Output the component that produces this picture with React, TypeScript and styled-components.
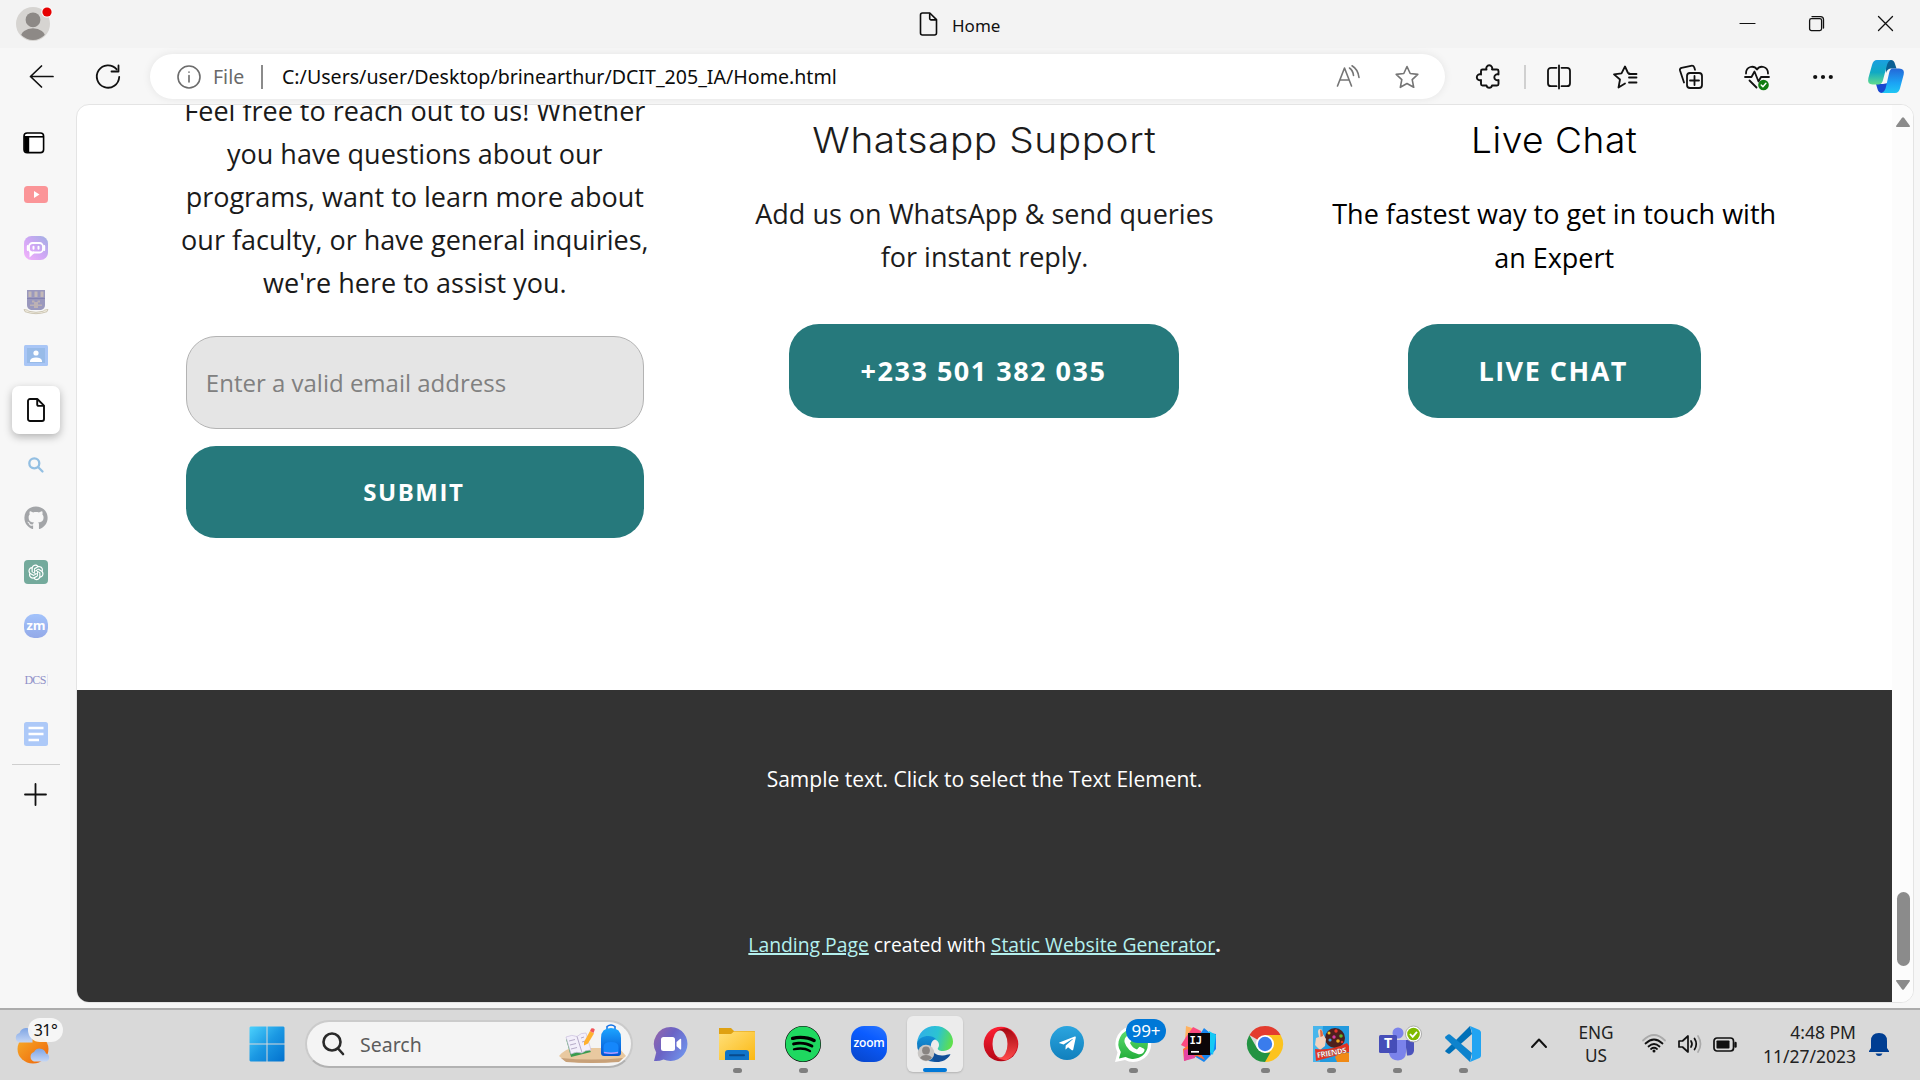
import React from "react";
import styled, { createGlobalStyle } from "styled-components";
import { FaGithub, FaSpotify, FaTelegramPlane } from "react-icons/fa";
import { AiOutlineOpenAI } from "react-icons/ai";

const ui = `"Noto Sans", "Open Sans", sans-serif`;
const body = `"Open Sans", "Noto Sans", sans-serif`;

const Global = createGlobalStyle`
  * { box-sizing: border-box; }
  html, body { margin: 0; padding: 0; overflow: hidden; }
  svg { display: block; flex: none; overflow: visible; }
`;

const Screen = styled.div`
  width: 1920px;
  height: 1080px;
  display: flex;
  flex-direction: column;
  background: #f7f7f7;
  font-family: ${ui};
  color: #1b1b1b;
  overflow: hidden;
`;

/* ---------- title bar ---------- */
const TitleBar = styled.header`
  height: 48px;
  flex: none;
  background: #f3f3f3;
  display: grid;
  grid-template-columns: 919px 1fr auto;
  align-items: center;
`;
const ProfileSlot = styled.div`
  padding-left: 16px;
`;
const TabTitle = styled.div`
  display: flex;
  align-items: center;
  gap: 14px;
  font-size: 17px;
  color: #111;
  span { padding-top: 3px; }
`;
const WindowButtons = styled.div`
  display: flex;
`;
const WindowButton = styled.button`
  width: 69px;
  height: 48px;
  border: 0;
  padding: 0 0 1px;
  background: none;
  display: flex;
  align-items: center;
  justify-content: center;
`;

/* ---------- toolbar ---------- */
const Toolbar = styled.div`
  height: 56px;
  flex: none;
  display: flex;
  align-items: flex-start;
  padding: 6px 0 0 9px;
`;
const ToolButton = styled.button<{ $w?: number }>`
  width: ${(p) => p.$w ?? 66}px;
  height: 45px;
  flex: none;
  border: 0;
  padding: 0;
  background: none;
  display: flex;
  align-items: center;
  justify-content: center;
`;
const RuleSlot = styled.div`
  height: 45px;
  width: 2px;
  margin: 0 0 0 -8px;
  display: flex;
  align-items: center;
`;
const AddressBar = styled.div`
  width: 1295px;
  height: 45px;
  flex: none;
  margin-left: 9px;
  padding: 0 26px 0 27px;
  border-radius: 23px;
  background: #fff;
  box-shadow: 0 0 8px rgba(0, 0, 0, 0.08);
  display: flex;
  align-items: center;
`;
const Scheme = styled.span`
  margin-left: 12px;
  width: 48px;
  font-size: 19.5px;
  color: #6a6a6a;
`;
const BarRule = styled.i<{ $color?: string }>`
  width: 2px;
  height: 24px;
  flex: none;
  background: ${(p) => p.$color ?? "#8b8b8b"};
`;
const Url = styled.span`
  margin-left: 19px;
  flex: 1;
  font-size: 19.58px;
  color: #0c0c0c;
  white-space: nowrap;
`;
const BarActions = styled.div`
  display: flex;
  gap: 35px;
`;

/* ---------- middle ---------- */
const Middle = styled.div`
  height: 904px;
  flex: none;
  display: flex;
`;
const Sidebar = styled.nav`
  width: 76px;
  flex: none;
  display: flex;
  flex-direction: column;
  align-items: center;
  padding: 15px 4px 0 0;
`;
const SideItem = styled.div<{ $active?: boolean; $gap?: number; $nudge?: number }>`
  width: 48px;
  height: 48px;
  flex: none;
  margin-bottom: ${(p) => p.$gap ?? 6}px;
  padding-right: ${(p) => p.$nudge ?? 0}px;
  border-radius: 7px;
  display: flex;
  align-items: center;
  justify-content: center;
  background: ${(p) => (p.$active ? "#fff" : "transparent")};
  box-shadow: ${(p) => (p.$active ? "0 3px 8px rgba(0,0,0,.28)" : "none")};
`;
const SideRule = styled.i`
  width: 48px;
  height: 1px;
  background: #cfcfcf;
  margin-bottom: 5px;
`;
const ZoomMini = styled.div`
  width: 24px;
  height: 24px;
  border-radius: 10px;
  background: linear-gradient(#a3c3fb, #93a9e8);
  color: #fff;
  font: 700 13px/22px ${body};
  text-align: center;
`;
const DcsMark = styled.div`
  height: 12px;
  padding-right: 1px;
  border-right: 1px solid #e3e3f1;
  font: 400 12px/12px "Liberation Serif", serif;
  letter-spacing: -0.7px;
  color: #8f90c8;
`;
const PageFrame = styled.main`
  width: 1838px;
  height: 899px;
  flex: none;
  border: 1px solid #e4e4e4;
  border-radius: 13px;
  background: #fff;
  overflow: hidden;
  display: flex;
`;
const Page = styled.div`
  width: 1815px;
  height: 897px;
  flex: none;
  font-family: ${body};
  display: flex;
  flex-direction: column;
`;
const ContactSection = styled.section`
  height: 585px;
  flex: none;
  padding: 0 53px;
  display: grid;
  grid-template-columns: repeat(3, 1fr);
  overflow: hidden;
`;
const Column = styled.div`
  display: flex;
  flex-direction: column;
  align-items: center;
  min-width: 0;
`;
const Intro = styled.p`
  width: 500px;
  margin: -16px 0 0;
  font-size: 27px;
  line-height: 43.1px;
  text-align: center;
  color: #1a1a1a;
  white-space: nowrap;
`;
const Heading = styled.h2<{ $dark?: boolean; $stretch: number }>`
  margin: 14px 0 0;
  height: 44px;
  font: 300 35.3px/44px Inter, "Open Sans", sans-serif;
  letter-spacing: 0.5px;
  transform: scaleX(${(p) => p.$stretch});
  color: ${(p) => (p.$dark ? "#000" : "#1c1c1c")};
  white-space: nowrap;
`;
const Blurb = styled.p<{ $dark?: boolean }>`
  margin: 29px 0 0;
  height: 132px;
  font-size: 27px;
  line-height: ${(p) => (p.$dark ? 44 : 43.1)}px;
  text-align: center;
  color: ${(p) => (p.$dark ? "#000" : "#1c1c1c")};
  white-space: nowrap;
`;
const EmailInput = styled.input`
  width: 458px;
  height: 93px;
  margin-top: 32px;
  padding: 0 19px;
  border: 1px solid #b3b3b3;
  border-radius: 30px;
  background: #e5e5e5;
  font: 400 24px ${body};
  &::placeholder { color: #808080; opacity: 1; }
`;
const TealButton = styled.button<{ $w: number; $h?: number; $size?: number; $top?: number }>`
  width: ${(p) => p.$w}px;
  height: ${(p) => p.$h ?? 94}px;
  margin-top: ${(p) => p.$top ?? 0}px;
  padding: 0 2px 1px 0;
  border: 0;
  border-radius: 30px;
  background: #26797c;
  color: #fff;
  font: 700 ${(p) => p.$size ?? 27}px ${body};
  letter-spacing: 1.5px;
`;
const Footer = styled.footer`
  height: 312px;
  flex: none;
  background: #333;
  color: #fff;
  text-align: center;
`;
const SampleText = styled.p`
  margin: 0;
  padding-top: 72px;
  font-size: 21.03px;
  line-height: 34px;
`;
const Credit = styled.p`
  margin: 0;
  padding-top: 132px;
  font-size: 19.33px;
  line-height: 34px;
  b { font-weight: 700; }
`;
const CreditLink = styled.a`
  color: #b4f0ee;
  text-decoration: underline;
  text-decoration-thickness: 2px;
`;
const ScrollTrack = styled.div`
  flex: 1;
  background: #fcfcfc;
  display: flex;
  flex-direction: column;
  align-items: center;
  padding: 12px 0 0 1px;
`;
const ScrollThumb = styled.div`
  width: 13px;
  height: 74px;
  border-radius: 7px;
  background: #8b8b8b;
  margin: 765px 0 14px;
`;

/* ---------- taskbar ---------- */
const Taskbar = styled.footer`
  height: 72px;
  flex: none;
  border-top: 2px solid #acacac;
  background: #d9d9d9;
  display: flex;
  align-items: flex-start;
`;
const Weather = styled.div`
  position: relative;
  width: 234px;
  padding: 14px 0 0 15px;
`;
const Temp = styled.span`
  position: absolute;
  left: 28px;
  top: 8px;
  width: 35px;
  height: 24px;
  border-radius: 12px;
  background: rgba(247, 247, 247, 0.93);
  font-size: 16px;
  line-height: 24px;
  text-align: center;
  letter-spacing: -0.6px;
  color: #111;
`;
const Slot = styled.div<{ $w?: number }>`
  position: relative;
  width: ${(p) => p.$w ?? 66}px;
  height: 68px;
  flex: none;
  display: flex;
  flex-direction: column;
  align-items: center;
  padding-top: 16px;
`;
const Tile = styled.div`
  width: 56px;
  height: 56px;
  margin-top: -10px;
  padding-top: 10px;
  border-radius: 6px;
  background: #ececec;
  box-shadow: 0 1px 2px rgba(0, 0, 0, 0.18);
  display: flex;
  flex-direction: column;
  align-items: center;
`;
const Indicator = styled.i<{ $active?: boolean }>`
  width: ${(p) => (p.$active ? 24 : 9)}px;
  height: 5px;
  margin-top: 6px;
  border-radius: 3px;
  background: ${(p) => (p.$active ? "#0078d7" : "#7f7f7f")};
`;
const SearchBox = styled.div`
  width: 328px;
  height: 48px;
  margin: 10px 5px 0 5px;
  padding: 0 5px 0 15px;
  flex: none;
  border: 2px solid #cbcbcb;
  border-bottom-color: #b2b2b2;
  border-radius: 24px;
  background: #f4f4f4;
  display: flex;
  align-items: center;
  font-size: 19.5px;
  color: #5c5c5c;
  span { flex: 1; padding-left: 16px; }
`;
const Count = styled.span`
  position: absolute;
  left: 26px;
  top: 9px;
  width: 40px;
  height: 24px;
  border-radius: 12px;
  background: #0078d7;
  color: #fff;
  font-size: 17px;
  line-height: 24px;
  text-align: center;
`;
const AppBox = styled.div<{ $bg: string; $r?: number; $size?: number; $font: string }>`
  width: ${(p) => p.$size ?? 36}px;
  height: ${(p) => p.$size ?? 36}px;
  border-radius: ${(p) => p.$r ?? 0}px;
  background: ${(p) => p.$bg};
  color: #fff;
  font: ${(p) => p.$font};
  display: flex;
  align-items: center;
  justify-content: center;
`;
const ZoomBox = styled(AppBox)`
  letter-spacing: -0.2px;
  span { padding-bottom: 3px; }
`;
const Tray = styled.div`
  flex: 1;
  height: 70px;
  padding-left: 35px;
  display: flex;
  align-items: flex-start;
`;
const TrayIcon = styled.div<{ $w: number; $top: number }>`
  width: ${(p) => p.$w}px;
  padding-top: ${(p) => p.$top}px;
`;
const Language = styled.div`
  width: 62px;
  margin-right: 15px;
  padding-top: 12px;
  font-size: 17.2px;
  line-height: 22.5px;
  text-align: center;
  color: #222;
`;
const Clock = styled.div`
  width: 119px;
  padding-top: 10px;
  font-size: 17.5px;
  line-height: 24px;
  text-align: right;
  white-space: nowrap;
  color: #222;
`;
const BellSlot = styled.div`
  padding: 23px 0 0 13px;
`;

/* ---------- icons ---------- */
const Line: React.FC<{ w: number; h: number; sw?: number; color?: string; children: React.ReactNode }> = ({ w, h, sw = 1.6, color = "#111", children }) => (
  <svg width={w} height={h} viewBox={`0 0 ${w} ${h}`} fill="none" stroke={color} strokeWidth={sw} strokeLinecap="round" strokeLinejoin="round">
    {children}
  </svg>
);

const FileIcon = ({ w = 18, h = 24, sw = 1.6 }) => (
  <svg width={w} height={h} viewBox="0 0 18 24" fill="none" stroke="#0c0c0c" strokeWidth={sw} strokeLinejoin="round">
    <path d="M3 1h7.3L17 7.6V21a2 2 0 0 1-2 2H3a2 2 0 0 1-2-2V3a2 2 0 0 1 2-2z" />
    <path d="M10.2 1.2V6.500a1.400 1.400 0 0 0 1.400 1.400H17" />
  </svg>
);

const Avatar = () => (
  <svg width="38" height="36" viewBox="0 0 38 36">
    <defs><clipPath id="av"><circle cx="17" cy="18" r="16" /></clipPath></defs>
    <circle cx="17" cy="18" r="17" fill="#d6d4d1" />
    <g clipPath="url(#av)" fill="#8d8986">
      <circle cx="17" cy="13.800" r="7.400" />
      <ellipse cx="17" cy="32" rx="12.500" ry="9.800" />
    </g>
    <circle cx="31" cy="6" r="5.800" fill="#f8f8f8" />
    <circle cx="31" cy="6" r="4.600" fill="#e60000" />
  </svg>
);

const starPath = "M12 1.500l3.200 7 7.600.9-5.600 5.200 1.500 7.700L12 18.500l-6.700 3.800 1.500-7.700L1.200 9.400l7.600-.9z";

const Copilot = () => (
  <svg width="36" height="33" viewBox="0 0 36 33">
    <defs>
      <linearGradient id="cpa" x1="0" y1="0" x2="0" y2="1"><stop offset="0" stopColor="#1b9fe0" /><stop offset=".5" stopColor="#10a9c4" /><stop offset="1" stopColor="#62dc8c" /></linearGradient>
      <linearGradient id="cpb" x1="0" y1="0" x2="0" y2="1"><stop offset="0" stopColor="#2468d8" /><stop offset=".6" stopColor="#1ba4f5" /><stop offset="1" stopColor="#20c6f4" /></linearGradient>
    </defs>
    <path d="M17 0h6q3 0 4 4l1.500 4.500h-6Q19 9 18 13z" fill="#0a5f93" />
    <path d="M8 24h7l5-1-2 7q-1 3-4 3-3.500 0-4.500-4z" fill="#1848d0" />
    <path d="M9 0h14q-3 1-4 5l-4 15q-1 4.500-5 4.500H4.500Q-1 24.500.4 18L4 5Q5.300 0 9 0z" fill="url(#cpa)" />
    <path d="M24.500 8.500H31q6 0 4.700 6l-3.600 13.500Q31 33 27 33H13.500q3-1 4.200-5l3.400-15q1-4.500 3.400-4.500z" fill="url(#cpb)" />
  </svg>
);

const Poe = () => (
  <svg width="24" height="24" viewBox="0 0 24 24">
    <defs><linearGradient id="poe" x1="0" y1="1" x2="1" y2="0"><stop offset="0" stopColor="#f5b2fb" /><stop offset=".5" stopColor="#cfa7f5" /><stop offset="1" stopColor="#a0b0e2" /></linearGradient></defs>
    <rect width="24" height="24" rx="7.500" fill="url(#poe)" />
    <rect x="5" y="7" width="14" height="9.500" rx="3.500" fill="none" stroke="#fff" strokeWidth="1.800" />
    <path d="M3.800 10v4M20.200 10v4M6.500 16v3.200l3-2.700M9.500 10.700v2M14.500 10.700v2" stroke="#fff" strokeWidth="2" fill="none" strokeLinecap="round" />
  </svg>
);

const Crest = () => (
  <svg width="24" height="24" viewBox="0 0 24 24">
    <path d="M3 0h18v15q0 4-4 5H7q-4-1-4-5z" fill="#9a98bd" />
    <path d="M4.500 1.500h3v5.500h-3zM10.500 1.500h3v5.500h-3zM16.500 1.500h3v5.500h-3z" fill="#c4b9b8" />
    <path d="M3 8.500h18" stroke="#8583b0" />
    <path d="M8 10.500h2.500v2H8zM13.500 10.500H16v2h-2.500zM6 14.500h12v1.500H6zM10 12h4v6h-4z" fill="#bdb1b4" />
    <path d="M0 19.500q4 .2 5 1.800 7 2 14 0 1-1.600 5-1.800l-1 2.200q-11 4-22 0z" fill="#f3efe3" stroke="#c3bba6" strokeWidth=".8" />
  </svg>
);

const WeatherIcon = () => (
  <svg width="37" height="42" viewBox="0 0 37 42">
    <defs>
      <linearGradient id="sun" x1="0" y1="0" x2="1" y2="1"><stop offset="0" stopColor="#f7b02c" /><stop offset="1" stopColor="#ee6208" /></linearGradient>
      <linearGradient id="cl" x1="0" y1="0" x2="0" y2="1"><stop offset="0" stopColor="#7fa5e4" /><stop offset="1" stopColor="#c4d6f5" /></linearGradient>
    </defs>
    <ellipse cx="18" cy="25" rx="15.500" ry="14.500" fill="url(#sun)" />
    <path d="M4 18.500a5 5 0 0 1 .5-9.500 7 7 0 0 1 13-1v10.500z" fill="url(#cl)" />
    <path d="M19 37.500a5 5 0 0 1 0-9.500 6.500 6.500 0 0 1 12 1.500 4.200 4.200 0 0 1 .5 8z" fill="url(#cl)" />
  </svg>
);

const StartIcon = () => (
  <svg width="36" height="36" viewBox="0 0 36 36">
    <defs><linearGradient id="win" gradientUnits="userSpaceOnUse" x1="0" y1="0" x2="36" y2="36"><stop offset="0" stopColor="#4dd3fd" /><stop offset=".5" stopColor="#1b98e3" /><stop offset="1" stopColor="#0270cd" /></linearGradient></defs>
    <path d="M1.500.5h16v17H.5v-16zM18.500.5h16l1 1v16h-17zM.5 18.500h17v17h-16l-1-1zM18.500 18.500h17v16l-1 1h-16z" fill="url(#win)" />
  </svg>
);

const SearchArt = () => (
  <svg width="67" height="38" viewBox="0 0 67 38">
    <defs><linearGradient id="bag" x1="0" y1="0" x2="0" y2="1"><stop offset="0" stopColor="#1ca5ff" /><stop offset="1" stopColor="#0353d4" /></linearGradient></defs>
    <path d="M0 31q7-8 15-8h45l7 8-6 5q-27 4-55 0z" fill="#e9c9a0" />
    <path d="M2 33q30 3 62 0l-4 4q-28 2-53 0z" fill="#c8a179" />
    <path d="M7 14l5 18 20-5-3-5z" fill="#3a9b4e" />
    <path d="M7 12q6-3 11-.5 4-4 9-3.500l5 17q-6 0-9 3-6-2-11 1z" fill="#f3effa" stroke="#c8bedc" strokeWidth=".7" />
    <path d="M18 11.500l5 16M10 16l6-1.500M11 20l6-1.500M12 24l6-1.500M22 13l3-1M23 17l5-1.500" stroke="#b6abc8" strokeWidth="1" />
    <path d="M25 17l6-11 4 2.500-6 10-4 2z" fill="#ffb12e" />
    <path d="M31 6l1.200-2.500q2-1 3.600 1L34.500 8z" fill="#f2555a" />
    <path d="M48 4V1.500q4-3 8 0V4" stroke="#1170e5" strokeWidth="1.500" fill="none" />
    <path d="M42 13q0-10 10-10t10 10v15q0 3-3 3H45q-3 0-3-3z" fill="url(#bag)" />
    <path d="M44.500 22q0-5 7.500-5t7.500 5v6h-15z" fill="#1587fb" />
    <path d="M45 27.500q7 1.500 14 0" stroke="#b79cff" fill="none" strokeWidth="1.400" />
  </svg>
);

const ChatIcon = () => (
  <svg width="36" height="36" viewBox="0 0 36 36">
    <defs><linearGradient id="chat" x1="0" y1="0" x2="1" y2=".6"><stop offset="0" stopColor="#9a66a8" /><stop offset=".5" stopColor="#6a63c5" /><stop offset="1" stopColor="#6f8ee8" /></linearGradient></defs>
    <path d="M18 1a17 17 0 1 1-7.500 32.500Q6 35.500 1 35l2.200-8.500A17 17 0 0 1 18 1z" fill="url(#chat)" />
    <rect x="8" y="11" width="14" height="14" rx="2.500" fill="#fff" />
    <path d="M23.500 16l3.500-3q1.200-.8 1.200.8v8.600q0 1.600-1.200.8l-3.500-3z" fill="#fff" />
  </svg>
);

const FolderIcon = () => (
  <svg width="36" height="36" viewBox="0 0 36 36">
    <defs><linearGradient id="fo" x1="0" y1="0" x2="1" y2="1"><stop offset="0" stopColor="#ffe07a" /><stop offset="1" stopColor="#fbb813" /></linearGradient></defs>
    <path d="M0 2h12l3 3h20a1 1 0 0 1 1 1v8H0z" fill="#dfa112" />
    <path d="M0 8h12l3-2.500h20q1 0 1 1V34H0z" fill="url(#fo)" />
    <path d="M6 34v-7q0-3 3-3h18q3 0 3 3v7z" fill="#0f74c9" />
    <path d="M11 29.200h14" stroke="#084a8c" strokeWidth="2" strokeLinecap="round" />
  </svg>
);

const EdgeIcon = () => (
  <svg width="36" height="36" viewBox="0 0 36 36">
    <defs>
      <linearGradient id="ea" x1="0" y1=".3" x2="1" y2=".5"><stop offset="0" stopColor="#31aee9" /><stop offset=".55" stopColor="#2bc3d2" /><stop offset="1" stopColor="#5fe04b" /></linearGradient>
      <linearGradient id="eb" x1="0" y1="0" x2="0" y2="1"><stop offset="0" stopColor="#1292d8" /><stop offset="1" stopColor="#0f5aa6" /></linearGradient>
    </defs>
    <path d="M0 17C1 7 8 0 18 0c11 0 18 8 18 15.500 0 6-4.500 9.500-10 9.500-4 0-6-1.500-5-3 2.500-3.500.5-8-5-9-7-1.300-13 0-16 4z" fill="url(#ea)" />
    <path d="M0 17c2-7 14-9.500 19-4-4 1-6 5-5 10 1 6 5 10 11 11.500A18 18 0 0 1 0 17z" fill="url(#eb)" />
    <path d="M14 22c1 4 6 8 12 7.500 4-.3 6-2 7.500-1-3 5-8 7.500-14 7.500-5-2.500-7.500-9-5.500-14z" fill="#114f99" />
    <circle cx="9" cy="27" r="8.300" fill="#c9c7c5" />
    <circle cx="9" cy="24.500" r="3.900" fill="#888481" />
    <path d="M3 32q1.500-3 6-3t6 3q-6 5.500-12 0z" fill="#888481" />
  </svg>
);

const OperaIcon = () => (
  <svg width="36" height="36" viewBox="0 0 36 36">
    <defs>
      <linearGradient id="op" x1="0" y1="0" x2="0" y2="1"><stop offset="0" stopColor="#ff2034" /><stop offset="1" stopColor="#b30716" /></linearGradient>
      <linearGradient id="oq" x1="0" y1="0" x2="0" y2="1"><stop offset="0" stopColor="#a40812" /><stop offset="1" stopColor="#ff4b4b" /></linearGradient>
    </defs>
    <circle cx="18" cy="18" r="17.300" fill="url(#op)" />
    <path d="M13 5.500q5-4 11-3.200A17.300 17.300 0 0 1 24 34q-6 .8-11-3 5 1.500 9-2.500 5-10 0-20-4-4.500-9-3z" fill="url(#oq)" />
    <ellipse cx="17" cy="18" rx="7.500" ry="13.500" fill="#dedede" />
  </svg>
);

const WhatsappIcon = () => (
  <svg width="38" height="36" viewBox="0 0 38 36">
    <defs><linearGradient id="wa" x1="0" y1="0" x2="0" y2="1"><stop offset="0" stopColor="#5fe070" /><stop offset="1" stopColor="#24ad3b" /></linearGradient></defs>
    <path d="M19 0a18 18 0 1 1-8 34L1 36l2.500-9.500A18 18 0 0 1 19 0z" fill="#fff" />
    <path d="M19 3a15 15 0 1 1-7.500 28L5 32.500 6.800 26A15 15 0 0 1 19 3z" fill="url(#wa)" />
    <path d="M13 10q2-1.500 3 .5l1.500 3.500q.3 1-1.500 3 2.500 5 7 6.500l2-2.300q.6-.7 1.500-.2l3.500 1.800q1 .5.300 2.200-2 4-6.500 3-10.500-2.500-13.300-12-.5-4 2.500-6z" fill="#fff" />
  </svg>
);

const IdeaIcon = () => (
  <svg width="36" height="36" viewBox="0 0 36 36">
    <path d="M5 0l9 3 4 10-8 10-9-4 3-5z" fill="#ffb15e" />
    <path d="M12 1l8 4 2 8-14 10-8-4 5-8z" fill="#fc4a80" />
    <path d="M23 2l6 5 6 1v15l-5 6-7 7-10-6 5-20z" fill="#1786f0" />
    <path d="M28 5l7 4-3 20-8-8z" fill="#16c9f3" />
    <path d="M2 23l10-7 12 18-8-4-13 5z" fill="#ff6a36" />
    <path d="M3 24l9-2 2 10-11 3z" fill="#e545a3" />
    <rect x="7" y="7" width="22" height="22" fill="#0b0508" />
    <path d="M10 25.800h8" stroke="#fff" strokeWidth="1.700" />
    <text x="8.500" y="18" fill="#fff" fontFamily="DejaVu Sans Mono, monospace" fontWeight="700" fontSize="10.500">IJ</text>
  </svg>
);

const ChromeIcon = () => (
  <svg width="36" height="36" viewBox="0 0 36 36">
    <path d="M18 18L2.400 9A18 18 0 0 1 33.600 9z" fill="#e33b2e" />
    <path d="M18 18V9h15.600A18 18 0 0 1 18 36z" fill="#fcc31e" />
    <path d="M18 36A18 18 0 0 1 2.400 9l7.800 13.500 7.800 4.500 5.400-.5z" fill="#229342" />
    <circle cx="18" cy="18" r="9" fill="#fff" />
    <circle cx="18" cy="18" r="7.200" fill="#3a7cec" />
  </svg>
);

const FriendsIcon = () => (
  <svg width="36" height="36" viewBox="0 0 36 36">
    <defs><clipPath id="fr"><rect width="36" height="36" /></clipPath></defs>
    <g clipPath="url(#fr)">
      <rect width="36" height="36" fill="#239ade" />
      <path d="M0 0h10l-3 36H0z" fill="#48b6ec" />
      <circle cx="22" cy="12" r="10" fill="#4e201d" />
      <circle cx="16" cy="7" r="1.500" fill="#f3c21b" /><circle cx="23" cy="5" r="1.700" fill="#e4342b" />
      <circle cx="28" cy="10" r="1.800" fill="#62b531" /><circle cx="21" cy="11" r="1.700" fill="#d53aa0" />
      <circle cx="25" cy="15" r="1.800" fill="#f0a61e" /><circle cx="17" cy="14" r="1.600" fill="#3f9be0" />
      <circle cx="29" cy="16" r="1.300" fill="#e4342b" />
      <path d="M5 6q0-3 2-3 2.500 0 3 5l3 5-1 7-5 4-5-5 1-7 3-1z" fill="#f2d3c0" />
      <path d="M7 3.500q3 0 3 6.500L7.500 11z" fill="#e0673f" />
      <path d="M2 23q16 2 32-6l2 3v6L3 35z" fill="#e53222" />
      <path d="M22 31q6-6 14-4v9H24z" fill="#f08a16" />
      <text x="4.500" y="32" transform="rotate(-10 4.500 32)" fill="#fff" stroke="#7a1a10" strokeWidth=".3" fontFamily="Open Sans, sans-serif" fontWeight="800" fontSize="7.800" textLength="30">FRIENDS</text>
    </g>
  </svg>
);

const TeamsIcon = () => (
  <svg width="36" height="36" viewBox="0 0 36 36">
    <circle cx="19" cy="7" r="5.500" fill="#7b83eb" />
    <path d="M26 14h9v11q-1 5-7 4.500z" fill="#4b53bc" />
    <path d="M11 14h16v12q0 8-8 8.500-7 0-9-7z" fill="#7b83eb" />
    <rect x="0" y="9" width="18" height="18" rx="1.500" fill="#464eb8" />
    <text x="9" y="22.300" textAnchor="middle" fill="#fff" fontFamily="Open Sans, sans-serif" fontWeight="700" fontSize="14">T</text>
    <circle cx="34.500" cy="8" r="8" fill="#fff" stroke="#9b9b9b" strokeWidth=".8" />
    <circle cx="34.500" cy="8" r="6.300" fill="#7fba00" />
    <path d="M31 8l2.700 2.800L38 5.800" stroke="#fff" strokeWidth="1.800" fill="none" />
  </svg>
);

const CodeIcon = () => (
  <svg width="36" height="36" viewBox="0 0 36 36">
    <path d="M.5 24.500L25 0l2 8L5 27.500q-1 .7-2 0L.5 25.700q-.8-.6 0-1.200z" fill="#0070b8" />
    <path d="M.5 10.500L3 8.600q1-.7 2 0L27 27l-2 9L.5 12.500q-1-1 0-2z" fill="#0e83cd" />
    <path d="M25 0l9.500 4q1.500 1 1.500 2.500v23q0 1.500-1.500 2.500L25 36l2-5V6z" fill="#21a4f2" />
  </svg>
);

const BellIcon = () => (
  <svg width="20" height="24" viewBox="0 0 20 24" fill="#003e92">
    <path d="M10 0q8 0 8 8v7l2 3v1H0v-1l2-3V8q0-8 8-8zM6.500 20.500h7q-1 2.500-3.500 2.500t-3.500-2.500z" />
  </svg>
);

type TaskApp = { icon: React.ReactNode; running?: boolean; count?: string };

const apps: TaskApp[] = [
  { icon: <ChatIcon /> },
  { icon: <FolderIcon />, running: true },
  { icon: <AppBox $bg="#000" $r={18} $font="400 10px sans-serif"><FaSpotify size={36} color="#1fd860" /></AppBox>, running: true },
  { icon: <ZoomBox $bg="linear-gradient(205deg,#2a76ff,#0b5cff 35%,#0744c8)" $r={13} $font={`600 12px ${body}`}><span>zoom</span></ZoomBox> },
];
const appsAfter: TaskApp[] = [
  { icon: <OperaIcon /> },
  { icon: <AppBox $bg="linear-gradient(#2ba5df,#1180bd)" $r={17} $size={34} $font="400 10px sans-serif"><FaTelegramPlane size={19} /></AppBox> },
  { icon: <WhatsappIcon />, running: true, count: "99+" },
  { icon: <IdeaIcon /> },
  { icon: <ChromeIcon />, running: true },
  { icon: <FriendsIcon />, running: true },
  { icon: <TeamsIcon />, running: true },
  { icon: <CodeIcon />, running: true },
];

const AppSlots = ({ items }: { items: TaskApp[] }) => (
  <>
    {items.map((a, i) => (
      <Slot key={i}>
        {a.icon}
        {a.count && <Count>{a.count}</Count>}
        {a.running && <Indicator />}
      </Slot>
    ))}
  </>
);

export default function App() {
  return (
    <Screen>
      <Global />
      <TitleBar>
        <ProfileSlot><Avatar /></ProfileSlot>
        <TabTitle><FileIcon w={19} h={24} /><span>Home</span></TabTitle>
        <WindowButtons>
          <WindowButton><Line w={15} h={15} sw={1.2}><path d="M0 7.500h15" /></Line></WindowButton>
          <WindowButton><Line w={15} h={15} sw={1.3}><rect x=".6" y="2.600" width="12" height="12" rx="1.800" /><path d="M3 .6h8.500a3 3 0 0 1 3 3V12" /></Line></WindowButton>
          <WindowButton><Line w={15} h={15} sw={1.3}><path d="M.5.5l14 14M14.500.5l-14 14" /></Line></WindowButton>
        </WindowButtons>
      </TitleBar>

      <Toolbar>
        <ToolButton><Line w={24} h={24} sw={1.7}><path d="M23 11.500H.5M11.500 1L.5 11.500l11 10.500" /></Line></ToolButton>
        <ToolButton><Line w={24} h={24} sw={1.8}><path d="M20.500 4.200A11.200 11.200 0 1 0 23.200 12M15.500 6.500h7V.5" /></Line></ToolButton>
        <AddressBar>
          <Line w={24} h={24} color="#6c6c6c"><circle cx="12" cy="12" r="11" /><path d="M12 10.500v6.500M12 7v.3" /></Line>
          <Scheme>File</Scheme>
          <BarRule />
          <Url>C:/Users/user/Desktop/brinearthur/DCIT_205_IA/Home.html</Url>
          <BarActions>
            <Line w={24} h={24} color="#757575"><path d="M1.500 21L8.500 3l7 18M4 15h9M13.500 3q3.500 2.500 4 7.500M16 .8q6 3.500 7 11.700" /></Line>
            <Line w={24} h={24} color="#757575"><path d={starPath} /></Line>
          </BarActions>
        </AddressBar>
        <ToolButton $w={87}>
          <Line w={24} h={24} sw={1.9}><path d="M5.500 4.500h4a3 3 0 1 1 5.500 0H20q1.500 0 1.500 1.500v3.500a3 3 0 1 0 0 5.500v4q0 1.500-1.500 1.500h-5a2.800 2.800 0 0 1-5.500 0h-4Q4 20.500 4 19v-4a3 3 0 1 1 0-5.500V6Q4 4.500 5.500 4.500z" /></Line>
        </ToolButton>
        <RuleSlot><BarRule $color="#d0d0d0" /></RuleSlot>
        <ToolButton>
          <Line w={24} h={24} sw={1.8}><path d="M9.500 2.800H4a3 3 0 0 0-3 3v12.400a3 3 0 0 0 3 3h5.500M14.500 2.800H20a3 3 0 0 1 3 3v12.400a3 3 0 0 1-3 3h-5.500M12 .5v23" /></Line>
        </ToolButton>
        <ToolButton>
          <Line w={24} h={24} sw={1.8}><path d="M12 18.500l-6.500 4 1.500-8L1 9.400l7.500-1L12 1.500l3 6.500 1.500.4M16 12.500H23.500M16 17.500H23.500M18.500 8.500" /><path d="M16 9H23.500" /></Line>
        </ToolButton>
        <ToolButton>
          <Line w={24} h={24} sw={1.8}><rect x="8" y="8" width="15" height="15" rx="3" /><path d="M15.500 11v9M11 15.500h9M5 17.500L1 5.500q-.5-2 1.500-2.700L12 .8q2.500-.5 3.200 1.500l.8 2.500" /></Line>
        </ToolButton>
        <ToolButton>
          <Line w={24} h={24} sw={1.8}>
            <path d="M1 8.500C1 1 9 0 12 4.500 15 0 23 1 23 8.500M0 12h6.500l3-5.500 4 10 2.500-4.500H24M4.500 15.500l7 7" />
            <circle cx="18.500" cy="20" r="5.300" fill="#107c10" stroke="none" />
            <path d="M16.200 20l1.700 1.800 3-3.500" stroke="#fff" strokeWidth="1.400" />
          </Line>
        </ToolButton>
        <ToolButton>
          <svg width="20" height="6" viewBox="0 0 20 6" fill="#111"><circle cx="2.200" cy="3" r="2.100" /><circle cx="10" cy="3" r="2.100" /><circle cx="17.800" cy="3" r="2.100" /></svg>
        </ToolButton>
        <ToolButton $w={60}><Copilot /></ToolButton>
      </Toolbar>

      <Middle>
        <Sidebar>
          <SideItem $gap={3} $nudge={4}>
            <svg width="22" height="22" viewBox="0 0 22 22" fill="none" stroke="#000" strokeWidth="1.600"><rect x="1" y="1" width="19.600" height="19.600" rx="3.200" fill="#fff" /><path d="M1 4.800h19.400" /><path d="M1.200 5h5v15.500H4L1.200 19z" fill="#000" stroke="none" /></svg>
          </SideItem>
          <SideItem>
            <svg width="24" height="17" viewBox="0 0 24 17"><rect width="24" height="17" rx="3.500" fill="#fb9598" /><path d="M10 5l5.500 3.500L10 12z" fill="#fff" /></svg>
          </SideItem>
          <SideItem><Poe /></SideItem>
          <SideItem><Crest /></SideItem>
          <SideItem>
            <svg width="24" height="22" viewBox="0 0 24 22"><rect width="24" height="21" rx="1.500" fill="#a9c6f6" /><rect x="3" y="3" width="18" height="15" fill="#98bbe8" /><circle cx="12" cy="8" r="2.600" fill="#fff" /><path d="M6 17v-1.500q1-3 6-3t6 3V17z" fill="#fff" /></svg>
          </SideItem>
          <SideItem $active><FileIcon w={18} h={24} sw={1.9} /></SideItem>
          <SideItem $nudge={1}><Line w={15} h={15} sw={2.3} color="#93bfe2"><circle cx="6.300" cy="6.300" r="5" /><path d="M10 10l4.500 4.500" /></Line></SideItem>
          <SideItem><FaGithub size={24} color="#a3a5a8" /></SideItem>
          <SideItem><AppBox $bg="#74aa9c" $r={4} $size={24} $font="400 10px sans-serif"><AiOutlineOpenAI size={20} /></AppBox></SideItem>
          <SideItem><ZoomMini>zm</ZoomMini></SideItem>
          <SideItem><DcsMark>DCS</DcsMark></SideItem>
          <SideItem>
            <svg width="24" height="24" viewBox="0 0 24 24"><rect width="24" height="24" rx="2.500" fill="#adc9f8" /><path d="M4.500 6h15M4.500 12h15M4.500 18h10.500" stroke="#fff" strokeWidth="2.600" /></svg>
          </SideItem>
          <SideRule />
          <SideItem $nudge={1}><Line w={21} h={21} sw={1.8}><path d="M10.500 0v21M0 10.500h21" /></Line></SideItem>
        </Sidebar>

        <PageFrame>
          <Page>
            <ContactSection>
              <Column>
                <Intro>
                  Feel free to reach out to us! Whether<br />you have questions about our<br />programs, want to learn more about<br />our faculty, or have general inquiries,<br />we're here to assist you.
                </Intro>
                <EmailInput placeholder="Enter a valid email address" />
                <TealButton $w={458} $h={92} $size={24} $top={17}>SUBMIT</TealButton>
              </Column>
              <Column>
                <Heading $stretch={1.1}>Whatsapp Support</Heading>
                <Blurb>Add us on WhatsApp &amp; send queries<br />for instant reply.</Blurb>
                <TealButton $w={390}>+233 501 382 035</TealButton>
              </Column>
              <Column>
                <Heading $dark $stretch={1.05}>Live Chat</Heading>
                <Blurb $dark>The fastest way to get in touch with<br />an Expert</Blurb>
                <TealButton $w={293}>LIVE CHAT</TealButton>
              </Column>
            </ContactSection>
            <Footer>
              <SampleText>Sample text. Click to select the Text Element.</SampleText>
              <Credit><CreditLink>Landing Page</CreditLink> created with <CreditLink>Static Website Generator</CreditLink><b>.</b></Credit>
            </Footer>
          </Page>
          <ScrollTrack>
            <svg width="14" height="10" viewBox="0 0 14 10"><path d="M6 .8q1-1.200 2 0l6 8.200q.3 1-1 1H1q-1.300 0-1-1z" fill="#8b8b8b" /></svg>
            <ScrollThumb />
            <svg width="14" height="10" viewBox="0 0 14 10"><path d="M6 9.200q1 1.200 2 0L14 1q.3-1-1-1H1q-1.300 0-1 1z" fill="#8b8b8b" /></svg>
          </ScrollTrack>
        </PageFrame>
      </Middle>

      <Taskbar>
        <Weather><WeatherIcon /><Temp>31°</Temp></Weather>
        <Slot><StartIcon /></Slot>
        <SearchBox>
          <Line w={22} h={24} sw={2.6} color="#2a2a2a"><circle cx="10" cy="10" r="8.500" /><path d="M16 16.500l5 5.500" /></Line>
          <span>Search</span>
          <SearchArt />
        </SearchBox>
        <AppSlots items={apps} />
        <Slot><Tile><EdgeIcon /><Indicator $active /></Tile></Slot>
        <AppSlots items={appsAfter} />
        <Tray>
          <TrayIcon $w={34} $top={28}><Line w={16} h={10} sw={2}><path d="M1 9l7-7.500L15 9" /></Line></TrayIcon>
          <Language>ENG<br />US</Language>
          <TrayIcon $w={36} $top={24}>
            <Line w={24} h={20} sw={1.800}><path d="M1 6.500q11-11 22 0" stroke="#aaa" /><path d="M3.500 9.500q8.500-8 17 0M6.500 12.500q5.500-5 11 0M9 15q3-2.500 6 0" /><circle cx="12" cy="17" r="1.500" fill="#111" stroke="none" /></Line>
          </TrayIcon>
          <TrayIcon $w={35} $top={25}>
            <Line w={24} h={18} sw={1.700}><path d="M1 6h3.500L10 1v16l-5.500-5H1zM13 6q2 3 0 6M16.500 3.500q3.500 5.500 0 11" /><path d="M20 1q5 8 0 16" stroke="#aaa" /></Line>
          </TrayIcon>
          <TrayIcon $w={24} $top={27}>
            <Line w={24} h={15} sw={1.700}><rect x="1" y="1" width="19.500" height="13" rx="3" /><rect x="3.500" y="3.500" width="13" height="8" rx=".8" fill="#111" stroke="none" /><path d="M22.500 6v3.500" strokeWidth="2.400" /></Line>
          </TrayIcon>
          <Clock>4:48 PM<br />11/27/2023</Clock>
          <BellSlot><BellIcon /></BellSlot>
        </Tray>
      </Taskbar>
    </Screen>
  );
}
